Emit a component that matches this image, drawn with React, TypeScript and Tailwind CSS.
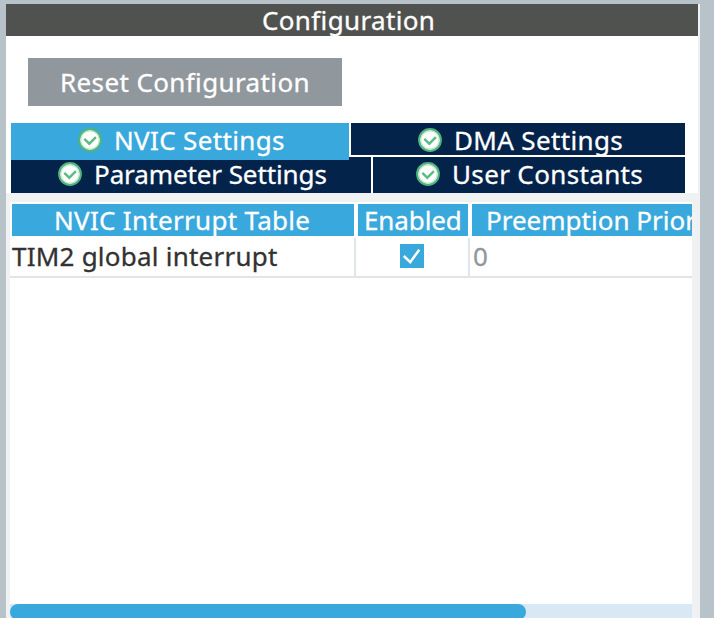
import type { ReactNode } from "react";

function StatusIcon() {
  return (
    <svg width="24" height="24" viewBox="0 0 24 24" className="shrink-0" fill="none">
      <circle cx="12" cy="12" r="10.8" fill="#fff" stroke="#4fb57c" strokeWidth="2.2" />
      <circle cx="12" cy="12" r="9.2" stroke="#c3e6d2" strokeWidth="1.2" />
      <path d="M6.3 10.8l5 4.9 6.6-6.6" stroke="#5dbb86" strokeWidth="2.4" />
    </svg>
  );
}

function Tab({ className, label, labelClass }: { className: string; label: string; labelClass: string }) {
  return (
    <div className={`flex shrink-0 items-start pt-[5px] text-white ${className}`}>
      <StatusIcon />
      <span className={`-mt-[5px] ml-3 leading-[34px] ${labelClass}`}>{label}</span>
    </div>
  );
}

function HeaderCell({ className, children }: { className: string; children: ReactNode }) {
  return <div className={`h-8 shrink-0 bg-[#39a8dc] leading-8 text-white ${className}`}>{children}</div>;
}

export default function App() {
  return (
    <div className="flex h-[618px] w-[714px] overflow-hidden bg-[#b8c3c9] pt-1 pl-1.5 font-['Noto_Sans','Open_Sans',sans-serif] text-[26px] whitespace-nowrap [-webkit-text-stroke:0.3px]">
      <div className="flex h-full w-[692px] shrink-0 flex-col bg-[#f0f1f3]">
        <div className="h-8 shrink-0 bg-[#505250] pl-[256px] leading-8 tracking-[0.35px] text-white">Configuration</div>
        <div className="h-[157px] shrink-0 bg-white pt-[22px]">
          <button className="ml-[22px] block h-12 w-[314px] bg-[#90979d] pl-8 text-left leading-[48px] tracking-[0.38px] text-white">
            Reset Configuration
          </button>
          <div className="mt-[17px] ml-[5px] w-[674px]">
            <div className="flex h-[34px] gap-0.5">
              <Tab className="relative z-10 h-[37px] w-[338px] bg-[#39a8dc] pl-[67px]" label="NVIC Settings" labelClass="tracking-[0.35px]" />
              <Tab className="h-8 w-[334px] bg-[#03234b] pl-[67px]" label="DMA Settings" labelClass="tracking-[0.35px]" />
            </div>
            <div className="flex h-9 gap-0.5">
              <Tab className="h-9 w-[360px] bg-[#03234b] pl-[47px]" label="Parameter Settings" labelClass="tracking-[-0.1px]" />
              <Tab className="h-9 w-[312px] bg-[#03234b] pl-[43px]" label="User Constants" labelClass="tracking-[0.35px]" />
            </div>
          </div>
        </div>
        <div className="mt-[9px] ml-1 flex w-[682px] flex-1 flex-col overflow-hidden bg-white pt-0.5">
          <div className="flex gap-1 pl-0.5">
            <HeaderCell className="w-[342px] pl-[42px] tracking-[0.3px]">NVIC Interrupt Table</HeaderCell>
            <HeaderCell className="w-[110px] pl-1.5 tracking-[-0.1px]">Enabled</HeaderCell>
            <HeaderCell className="w-[220px] pl-[14px] tracking-[0px]">Preemption Priority</HeaderCell>
          </div>
          <div className="flex h-[42px] shrink-0 border-b-2 border-[#e1e5e9] pt-0.5 leading-9 text-[#323232]">
            <div className="w-[346px] border-r-2 border-[#e1e5e9] pl-[2px] tracking-[0.23px]">TIM2 global interrupt</div>
            <div className="w-[114px] border-r-2 border-[#e1e5e9] pt-1.5 pl-11">
              <svg width="24" height="24" viewBox="0 0 24 24" fill="none">
                <path d="M0 0h24v24H0z" fill="#39a8dc" />
                <path d="M3.8 12l6.4 6.2L19.3 5.7" stroke="#fff" strokeWidth="2.5" />
              </svg>
            </div>
            <div className="pl-[3px] text-[#90979d]">0</div>
          </div>
          <div className="flex-1" />
          <div className="h-3.5 shrink-0 overflow-hidden bg-[#d9e8f5]">
            <div className="h-4 w-[516px] rounded-full bg-[#39a8dc]" />
          </div>
        </div>
      </div>
      <div className="h-full w-0.5 shrink-0 bg-[#f0f1f3]" />
    </div>
  );
}
